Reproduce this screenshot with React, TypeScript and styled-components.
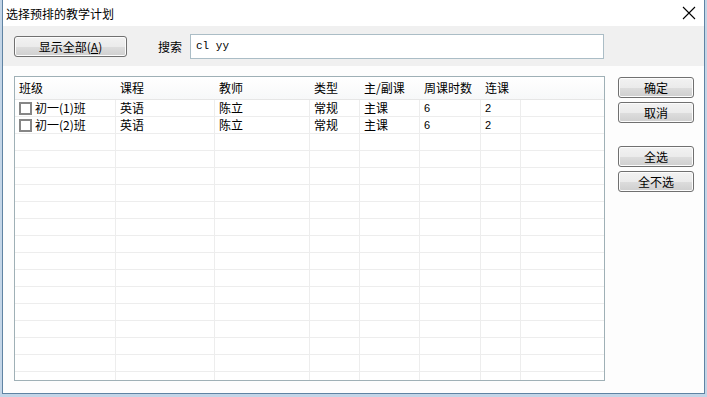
import React from 'react';
import styled, { createGlobalStyle } from 'styled-components';

const GlobalStyle = createGlobalStyle`
    body {
        margin: 0;
        background: #c3d5e7;
        font-family: "Noto Sans CJK SC", "Liberation Sans", sans-serif;
        font-size: 12px;
        color: #000;
    }
`;

const Window = styled.div`
    box-sizing: border-box;
    margin-left: 2px;
    width: 703px;
    height: 394px;
    background: #fdfdfd;
    border: 1px solid #5f83a3;
    border-top: none;
    display: flex;
    flex-direction: column;
`;

const TitleBar = styled.div`
    height: 26px;
    background: #fff;
    display: flex;
    align-items: center;
    justify-content: space-between;
    padding: 0 8px 0 3px;
    font-size: 12px;
`;

const CloseIcon = styled.svg`
    width: 14px;
    height: 14px;
`;

const Toolbar = styled.div`
    height: 40px;
    background: #f0f0f0;
    display: flex;
    align-items: center;
    padding-left: 11px;
`;

// Windows 7 style push button
const Button = styled.button<{ $width?: number }>`
    box-sizing: border-box;
    width: ${p => p.$width || 76}px;
    height: 21px;
    padding: 0;
    border: 1px solid #707070;
    border-radius: 3px;
    background: linear-gradient(#f2f2f2 0%, #ebebeb 50%, #dddddd 51%, #cfcfcf 100%);
    box-shadow: inset 0 0 0 1px #fcfcfc;
    font-family: "Noto Sans CJK SC", sans-serif;
    font-size: 12px;
    line-height: 19px;
    color: #000;

    u {
        text-decoration: underline;
    }
`;

const SearchLabel = styled.span`
    margin-left: 31px;
    margin-right: 8px;
`;

const SearchInput = styled.div`
    box-sizing: border-box;
    width: 414px;
    height: 25px;
    background: #fff;
    border: 1px solid #abbdc6;
    font-family: "Liberation Mono", monospace;
    font-size: 11px;
    line-height: 23px;
    padding-left: 5px;
`;

const Body = styled.div`
    display: flex;
    padding: 10px 0 0 11px;
    gap: 13px;
`;

const Grid = styled.div`
    box-sizing: border-box;
    width: 591px;
    height: 305px;
    border: 1px solid #9fb0b6;
    background: #fff;
    overflow: hidden;
`;

const cols = '101px 99px 95px 50px 60px 61px 40px 1fr';

const HeaderRow = styled.div`
    display: grid;
    grid-template-columns: ${cols};
    height: 23px;
    background: linear-gradient(#ffffff, #f7f8f9);
    border-bottom: 1px solid #e6e6e6;
    box-sizing: border-box;
`;

const HeaderCell = styled.div`
    padding-left: 4px;
    line-height: 22px;
`;

const Row = styled.div`
    display: grid;
    grid-template-columns: ${cols};
    height: 17px;
    box-sizing: border-box;
    border-bottom: 1px solid #ededed;
`;

const Cell = styled.div<{ $num?: boolean }>`
    box-sizing: border-box;
    border-right: 1px solid #ededed;
    padding-left: 4px;
    display: flex;
    align-items: center;
    white-space: nowrap;
    font-family: ${p => (p.$num ? '"Liberation Sans", sans-serif' : '"Noto Sans CJK SC", sans-serif')};
    font-size: ${p => (p.$num ? '11px' : '12px')};
    line-height: 16px;

    &:last-child {
        border-right: none;
    }
`;

const Check = styled.span`
    box-sizing: border-box;
    width: 13px;
    height: 13px;
    border: 2px solid #868686;
    background: #fff;
    margin-right: 3px;
    flex: none;
`;

const Side = styled.div`
    display: flex;
    flex-direction: column;
    gap: 4px;
    padding-top: 1px;
`;

const Spacer = styled.div`
    height: 15px;
`;

const headers = ['班级', '课程', '教师', '类型', '主/副课', '周课时数', '连课', ''];

const plans = [
    { cls: '初一(1)班', course: '英语', teacher: '陈立', type: '常规', main: '主课', hours: '6', link: '2' },
    { cls: '初一(2)班', course: '英语', teacher: '陈立', type: '常规', main: '主课', hours: '6', link: '2' },
];

const emptyRows = 15;

export default function App() {
    return (
        <>
            <GlobalStyle />
            <Window>
                <TitleBar>
                    <span>选择预排的教学计划</span>
                    <CloseIcon viewBox="0 0 14 14">
                        <path d="M1 1 L13 13 M13 1 L1 13" stroke="#000" strokeWidth="1.1" fill="none" />
                    </CloseIcon>
                </TitleBar>
                <Toolbar>
                    <Button $width={113}>
                        显示全部(<u>A</u>)
                    </Button>
                    <SearchLabel>搜索</SearchLabel>
                    <SearchInput>cl yy</SearchInput>
                </Toolbar>
                <Body>
                    <Grid>
                        <HeaderRow>
                            {headers.map((h, i) => (
                                <HeaderCell key={i}>{h}</HeaderCell>
                            ))}
                        </HeaderRow>
                        {plans.map(p => (
                            <Row key={p.cls}>
                                <Cell>
                                    <Check />
                                    {p.cls}
                                </Cell>
                                <Cell>{p.course}</Cell>
                                <Cell>{p.teacher}</Cell>
                                <Cell>{p.type}</Cell>
                                <Cell>{p.main}</Cell>
                                <Cell $num>{p.hours}</Cell>
                                <Cell $num>{p.link}</Cell>
                                <Cell />
                            </Row>
                        ))}
                        {Array.from({ length: emptyRows }).map((_, r) => (
                            <Row key={'e' + r}>
                                {headers.map((_, i) => (
                                    <Cell key={i} />
                                ))}
                            </Row>
                        ))}
                    </Grid>
                    <Side>
                        <Button>确定</Button>
                        <Button>取消</Button>
                        <Spacer />
                        <Button>全选</Button>
                        <Button>全不选</Button>
                    </Side>
                </Body>
            </Window>
        </>
    );
}
